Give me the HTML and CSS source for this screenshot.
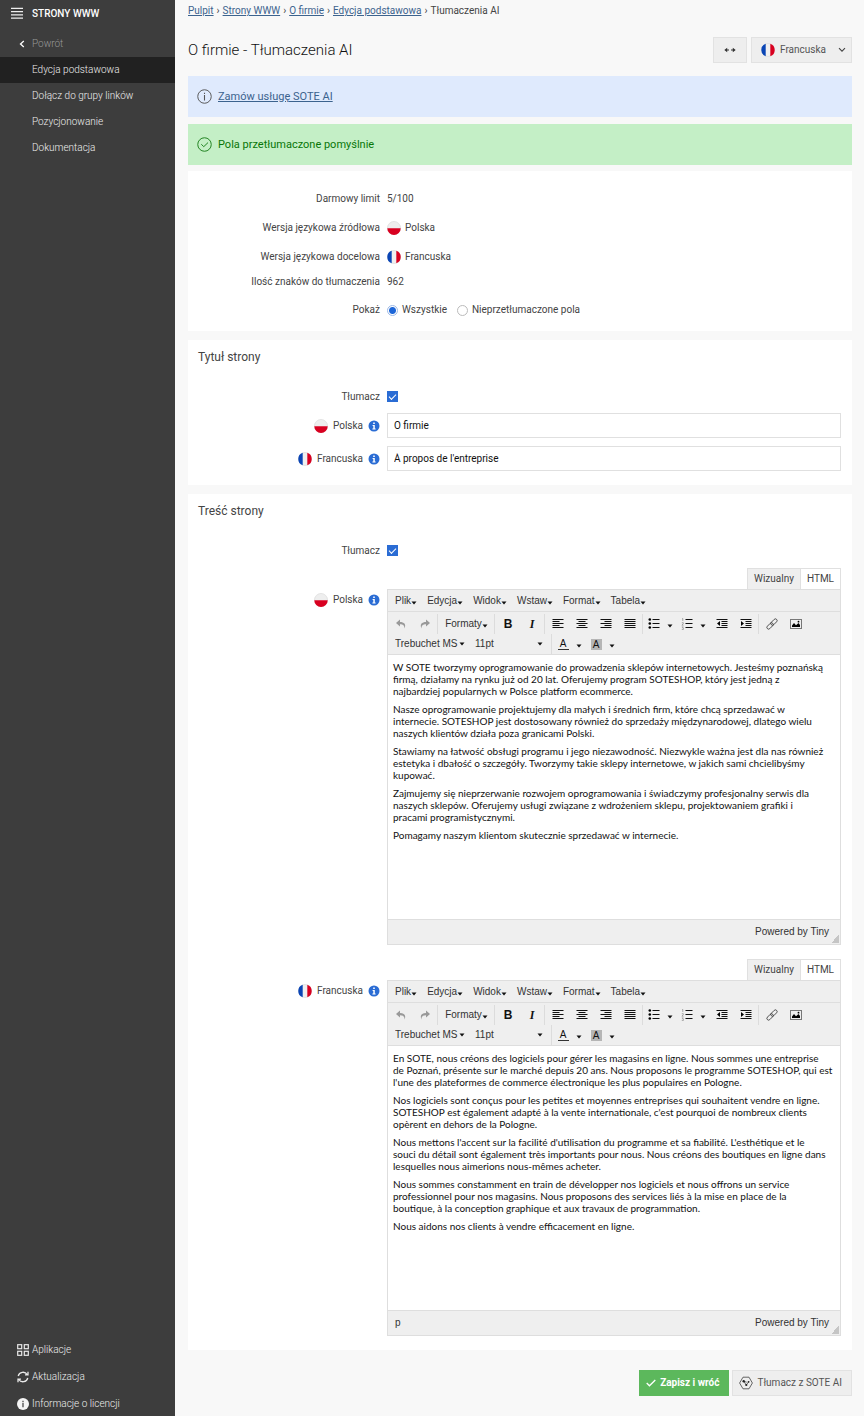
FILE: index.html
```html
<!DOCTYPE html>
<html lang="pl">
<head>
    <meta charset="UTF-8">
    <meta name="viewport" content="width=device-width, initial-scale=1.0">
    <title>O firmie - Tłumaczenia AI</title>
    <link rel="stylesheet" href="styles.css">
</head>
<body>
    <svg class="sprite" aria-hidden="true">
        <symbol id="i-pl" viewBox="0 0 14 14">
            <circle cx="7" cy="7" r="6.500" fill="#eee" stroke="#ddd" stroke-width=".8"/>
            <path d="M.3 7.200a6.700 6.700 0 0 0 13.400 0z" fill="#d80020"/>
        </symbol>
        <symbol id="i-fr" viewBox="0 0 14 14">
            <circle cx="7" cy="7" r="6.500" fill="#f0f0f0" stroke="#ddd" stroke-width=".8"/>
            <path d="M4.700 .7a6.700 6.700 0 0 0 0 12.600z" fill="#0a45b5"/>
            <path d="M9.300 .7a6.700 6.700 0 0 1 0 12.600z" fill="#d80020"/>
        </symbol>
        <symbol id="i-help" viewBox="0 0 12 12">
            <circle cx="6" cy="6" r="5.500" fill="#2a6cd4"/>
            <path d="M5.200 2.500h1.600v1.500H5.200zM4.600 5h2.200v3.500h.8v1H4.400v-1h.9V6h-.7z" fill="#fff"/>
        </symbol>
        <symbol id="i-caret" viewBox="0 0 6 4"><path d="M.5 .5h5L3 3.500z"/></symbol>
        <symbol id="i-undo" viewBox="0 0 12 12"><path d="M5 1.500 1 5l4 3.500V6.200c3 0 4.500 1 4.500 4.300C11.500 6 9 3.900 5 3.900z"/></symbol>
        <symbol id="i-redo" viewBox="0 0 12 12"><path d="M7 1.500 11 5 7 8.500V6.200c-3 0-4.500 1-4.500 4.300C.5 6 3 3.900 7 3.900z"/></symbol>
        <symbol id="i-left" viewBox="0 0 12 12"><path d="M.5 1.500h11M.5 3.500h7M.5 5.500h11M.5 7.500h7M.5 9.500h11" stroke="currentColor"/></symbol>
        <symbol id="i-center" viewBox="0 0 12 12"><path d="M.5 1.500h11M2.500 3.500h7M.5 5.500h11M2.500 7.500h7M.5 9.500h11" stroke="currentColor"/></symbol>
        <symbol id="i-right" viewBox="0 0 12 12"><path d="M.5 1.500h11M4.500 3.500h7M.5 5.500h11M4.500 7.500h7M.5 9.500h11" stroke="currentColor"/></symbol>
        <symbol id="i-justify" viewBox="0 0 12 12"><path d="M.5 1.500h11M.5 3.500h11M.5 5.500h11M.5 7.500h11M.5 9.500h11" stroke="currentColor"/></symbol>
        <symbol id="i-bullets" viewBox="0 0 12 12">
            <path d="M4.500 1.500h7M4.500 5.500h7M4.500 9.500h7" stroke="currentColor"/>
            <circle cx="1.800" cy="1.500" r="1.300"/><circle cx="1.800" cy="5.500" r="1.300"/><circle cx="1.800" cy="9.500" r="1.300"/>
        </symbol>
        <symbol id="i-numbers" viewBox="0 0 12 12">
            <path d="M4.500 1.500h7M4.500 5.500h7M4.500 9.500h7" stroke="currentColor"/>
            <path d="M1 1l.8-.5V3M.8 4.700h1.500v1L.9 7.200h1.600M.8 8.900h1.500l-.7 1 .8.400v1.100H.8" fill="none" stroke="#777" stroke-width=".6"/>
        </symbol>
        <symbol id="i-outdent" viewBox="0 0 12 12"><path d="M.5 1.500h11M5.500 3.500h6M5.500 5.500h6M5.500 7.500h6M.5 9.500h11" stroke="currentColor"/><path d="M4 3v5L1 5.500z"/></symbol>
        <symbol id="i-indent" viewBox="0 0 12 12"><path d="M.5 1.500h11M5.500 3.500h6M5.500 5.500h6M5.500 7.500h6M.5 9.500h11" stroke="currentColor"/><path d="M1 3v5l3-2.500z"/></symbol>
        <symbol id="i-link" viewBox="0 0 12 12">
            <g fill="none" stroke="#333" stroke-width=".8" transform="rotate(-45 6 6)"><rect x="-.5" y="4.300" width="7.500" height="3.400" rx="1.700"/><rect x="5" y="4.300" width="7.500" height="3.400" rx="1.700"/></g>
        </symbol>
        <symbol id="i-image" viewBox="0 0 12 12">
            <rect x=".5" y="1.500" width="11" height="9" fill="none" stroke="#777"/>
            <path d="M2 9V7.500L4 5l2 2.200L8.500 5 10 7v2z"/><circle cx="8.500" cy="3.700" r=".9"/>
        </symbol>
    </svg>

    <div class="layout">
        <aside class="sidebar">
            <div class="sidebar-title">
                <button class="menu-btn" aria-label="Menu">
                    <svg viewBox="0 0 13 13"><path d="M0 1h13M0 4.500h13M0 8h13M0 11.500h13" stroke="#eee" stroke-width="1.500"/></svg>
                </button>
                <span>STRONY WWW</span>
            </div>
            <nav class="side-nav">
                <a href="#" class="back"><svg viewBox="0 0 6 8"><path d="M4.800 1 1.500 4l3.300 3" fill="none" stroke="#fff" stroke-width="1.300"/></svg>Powrót</a>
                <a href="#" class="active">Edycja podstawowa</a>
                <a href="#">Dołącz do grupy linków</a>
                <a href="#">Pozycjonowanie</a>
                <a href="#">Dokumentacja</a>
            </nav>
            <nav class="side-bottom">
                <a href="#">
                    <svg viewBox="0 0 12 12" fill="none" stroke="#e8e8e8" stroke-width="1.200"><rect x=".7" y=".7" width="4" height="4"/><rect x="7.300" y=".7" width="4" height="4"/><rect x=".7" y="7.300" width="4" height="4"/><rect x="7.300" y="7.300" width="4" height="4"/></svg>
                    Aplikacje
                </a>
                <a href="#">
                    <svg viewBox="0 0 12 12" fill="none" stroke="#e8e8e8" stroke-width="1.300"><path d="M1.200 5A5 5 0 0 1 10.200 3.500M10.800 7a5 5 0 0 1-9 1.500M11 .8v3H8M1 11.200v-3h3"/></svg>
                    Aktualizacja
                </a>
                <a href="#">
                    <svg viewBox="0 0 12 12"><circle cx="6" cy="6" r="6" fill="#f4f4f4"/><path d="M5.400 2.700h1.200v1.200H5.400zM5.400 4.800h1.200v4.400H5.400z" fill="#3d3d3d"/></svg>
                    Informacje o licencji
                </a>
            </nav>
        </aside>

        <main class="content">
            <nav class="breadcrumbs">
                <a href="#">Pulpit</a><span>›</span><a href="#">Strony WWW</a><span>›</span><a href="#">O firmie</a><span>›</span><a href="#">Edycja podstawowa</a><span>›</span>Tłumaczenia AI
            </nav>

            <header class="page-head">
                <h1>O firmie - Tłumaczenia AI</h1>
                <button class="btn swap" aria-label="Zamień języki">
                    <svg viewBox="0 0 12 6"><path d="M2 3h3M7 3h3" stroke="#333" stroke-width="1.200"/><path d="M3.200 .8v4.400L.3 3zM8.800 .8v4.400L11.700 3z" fill="#333"/></svg>
                </button>
                <div class="btn lang-select">
                    <svg class="flag"><use href="#i-fr"/></svg>
                    <select aria-label="Język">
                        <option>Francuska</option>
                        <option>Polska</option>
                    </select>
                    <svg class="chevron" viewBox="0 0 8 6"><path d="M1 1.200 4 4.200l3-3" fill="none" stroke="#444" stroke-width="1.100"/></svg>
                </div>
            </header>

            <div class="alert info">
                <svg viewBox="0 0 14 14"><circle cx="7" cy="7" r="6.300" fill="none" stroke="#555" stroke-width=".9"/><path d="M6.500 3.500h1v1.100h-1zM6.500 5.700h1v5h-1z" fill="#555"/></svg>
                <a href="#">Zamów usługę SOTE AI</a>
            </div>
            <div class="alert success">
                <svg viewBox="0 0 14 14" fill="none" stroke="#1c7f1c" stroke-width=".9"><circle cx="7" cy="7" r="6.300"/><path d="M4 6.800 6.300 9l4-3.800"/></svg>
                <span>Pola przetłumaczone pomyślnie</span>
            </div>

            <section class="panel summary">
                <div class="row"><span class="label">Darmowy limit</span><span>5/100</span></div>
                <div class="row"><span class="label">Wersja językowa źródłowa</span><span class="lang"><svg class="flag"><use href="#i-pl"/></svg>Polska</span></div>
                <div class="row"><span class="label">Wersja językowa docelowa</span><span class="lang"><svg class="flag"><use href="#i-fr"/></svg>Francuska</span></div>
                <div class="row short"><span class="label">Ilość znaków do tłumaczenia</span><span>962</span></div>
                <div class="row tall">
                    <span class="label">Pokaż</span>
                    <div class="radios">
                        <label><input type="radio" name="show" checked>Wszystkie</label>
                        <label><input type="radio" name="show">Nieprzetłumaczone pola</label>
                    </div>
                </div>
            </section>

            <section class="panel">
                <h2>Tytuł strony</h2>
                <div class="row check-row"><label class="label" for="translateTitle">Tłumacz</label><input type="checkbox" id="translateTitle" checked></div>
                <div class="row field-row">
                    <label class="label" for="titlePl"><svg class="flag"><use href="#i-pl"/></svg>Polska<svg class="help"><use href="#i-help"/></svg></label>
                    <input type="text" id="titlePl" value="O firmie">
                </div>
                <div class="row field-row">
                    <label class="label" for="titleFr"><svg class="flag"><use href="#i-fr"/></svg>Francuska<svg class="help"><use href="#i-help"/></svg></label>
                    <input type="text" id="titleFr" value="À propos de l'entreprise">
                </div>
            </section>

            <section class="panel">
                <h2>Treść strony</h2>
                <div class="row check-row"><label class="label" for="translateBody">Tłumacz</label><input type="checkbox" id="translateBody" checked></div>

                <div class="row editor-row">
                    <span class="label" id="bodyPl"><svg class="flag"><use href="#i-pl"/></svg>Polska<svg class="help"><use href="#i-help"/></svg></span>
                    <div class="editor-wrap">
                        <div class="tabs"><button class="active">Wizualny</button><button>HTML</button></div>
                        <div class="editor">
                            <div class="menubar">
                                <button>Plik<svg class="caret"><use href="#i-caret"/></svg></button>
                                <button>Edycja<svg class="caret"><use href="#i-caret"/></svg></button>
                                <button>Widok<svg class="caret"><use href="#i-caret"/></svg></button>
                                <button>Wstaw<svg class="caret"><use href="#i-caret"/></svg></button>
                                <button>Format<svg class="caret"><use href="#i-caret"/></svg></button>
                                <button>Tabela<svg class="caret"><use href="#i-caret"/></svg></button>
                            </div>
                            <div class="toolbar">
                                <div class="tools">
                                    <div class="group">
                                        <button class="off" aria-label="Cofnij"><svg><use href="#i-undo"/></svg></button>
                                        <button class="off" aria-label="Ponów"><svg><use href="#i-redo"/></svg></button>
                                    </div>
                                    <div class="group"><button class="formats">Formaty<svg class="caret"><use href="#i-caret"/></svg></button></div>
                                    <div class="group">
                                        <button class="bold">B</button>
                                        <button class="italic">I</button>
                                    </div>
                                    <div class="group">
                                        <button aria-label="Do lewej"><svg><use href="#i-left"/></svg></button>
                                        <button aria-label="Do środka"><svg><use href="#i-center"/></svg></button>
                                        <button aria-label="Do prawej"><svg><use href="#i-right"/></svg></button>
                                        <button aria-label="Wyjustuj"><svg><use href="#i-justify"/></svg></button>
                                    </div>
                                    <div class="group">
                                        <button class="split" aria-label="Lista"><svg><use href="#i-bullets"/></svg><svg class="caret"><use href="#i-caret"/></svg></button>
                                        <button class="split" aria-label="Lista numerowana"><svg><use href="#i-numbers"/></svg><svg class="caret"><use href="#i-caret"/></svg></button>
                                        <button aria-label="Zmniejsz wcięcie"><svg><use href="#i-outdent"/></svg></button>
                                        <button aria-label="Zwiększ wcięcie"><svg><use href="#i-indent"/></svg></button>
                                    </div>
                                    <div class="group">
                                        <button aria-label="Odnośnik"><svg><use href="#i-link"/></svg></button>
                                        <button aria-label="Obraz"><svg><use href="#i-image"/></svg></button>
                                    </div>
                                </div>
                                <div class="tools">
                                    <div class="group fonts">
                                        <div class="pick font"><select aria-label="Czcionka"><option>Trebuchet MS</option></select><svg class="caret"><use href="#i-caret"/></svg></div>
                                        <div class="pick size"><select aria-label="Rozmiar"><option>11pt</option></select><svg class="caret"><use href="#i-caret"/></svg></div>
                                    </div>
                                    <div class="group">
                                        <button class="split" aria-label="Kolor tekstu"><span class="fore">A</span><svg class="caret"><use href="#i-caret"/></svg></button>
                                        <button class="split" aria-label="Kolor tła"><span class="back-color">A</span><svg class="caret"><use href="#i-caret"/></svg></button>
                                    </div>
                                </div>
                            </div>
                            <div class="text" contenteditable="true" spellcheck="false" role="textbox" aria-labelledby="bodyPl">
                                <p>W SOTE tworzymy oprogramowanie do prowadzenia sklepów internetowych. Jesteśmy poznańską<br>firmą, działamy na rynku już od 20 lat. Oferujemy program SOTESHOP, który jest jedną z<br>najbardziej popularnych w Polsce platform ecommerce.</p>
                                <p>Nasze oprogramowanie projektujemy dla małych i średnich firm, które chcą sprzedawać w<br>internecie. SOTESHOP jest dostosowany również do sprzedaży międzynarodowej, dlatego wielu<br>naszych klientów działa poza granicami Polski.</p>
                                <p>Stawiamy na łatwość obsługi programu i jego niezawodność. Niezwykle ważna jest dla nas również<br>estetyka i dbałość o szczegóły. Tworzymy takie sklepy internetowe, w jakich sami chcielibyśmy<br>kupować.</p>
                                <p>Zajmujemy się nieprzerwanie rozwojem oprogramowania i świadczymy profesjonalny serwis dla<br>naszych sklepów. Oferujemy usługi związane z wdrożeniem sklepu, projektowaniem grafiki i<br>pracami programistycznymi.</p>
                                <p>Pomagamy naszym klientom skutecznie sprzedawać w internecie.</p>
                            </div>
                            <div class="statusbar"><span></span><span>Powered by Tiny</span></div>
                        </div>
                    </div>
                </div>

                <div class="row editor-row">
                    <span class="label" id="bodyFr"><svg class="flag"><use href="#i-fr"/></svg>Francuska<svg class="help"><use href="#i-help"/></svg></span>
                    <div class="editor-wrap">
                        <div class="tabs"><button class="active">Wizualny</button><button>HTML</button></div>
                        <div class="editor">
                            <div class="menubar">
                                <button>Plik<svg class="caret"><use href="#i-caret"/></svg></button>
                                <button>Edycja<svg class="caret"><use href="#i-caret"/></svg></button>
                                <button>Widok<svg class="caret"><use href="#i-caret"/></svg></button>
                                <button>Wstaw<svg class="caret"><use href="#i-caret"/></svg></button>
                                <button>Format<svg class="caret"><use href="#i-caret"/></svg></button>
                                <button>Tabela<svg class="caret"><use href="#i-caret"/></svg></button>
                            </div>
                            <div class="toolbar">
                                <div class="tools">
                                    <div class="group">
                                        <button class="off" aria-label="Cofnij"><svg><use href="#i-undo"/></svg></button>
                                        <button class="off" aria-label="Ponów"><svg><use href="#i-redo"/></svg></button>
                                    </div>
                                    <div class="group"><button class="formats">Formaty<svg class="caret"><use href="#i-caret"/></svg></button></div>
                                    <div class="group">
                                        <button class="bold">B</button>
                                        <button class="italic">I</button>
                                    </div>
                                    <div class="group">
                                        <button aria-label="Do lewej"><svg><use href="#i-left"/></svg></button>
                                        <button aria-label="Do środka"><svg><use href="#i-center"/></svg></button>
                                        <button aria-label="Do prawej"><svg><use href="#i-right"/></svg></button>
                                        <button aria-label="Wyjustuj"><svg><use href="#i-justify"/></svg></button>
                                    </div>
                                    <div class="group">
                                        <button class="split" aria-label="Lista"><svg><use href="#i-bullets"/></svg><svg class="caret"><use href="#i-caret"/></svg></button>
                                        <button class="split" aria-label="Lista numerowana"><svg><use href="#i-numbers"/></svg><svg class="caret"><use href="#i-caret"/></svg></button>
                                        <button aria-label="Zmniejsz wcięcie"><svg><use href="#i-outdent"/></svg></button>
                                        <button aria-label="Zwiększ wcięcie"><svg><use href="#i-indent"/></svg></button>
                                    </div>
                                    <div class="group">
                                        <button aria-label="Odnośnik"><svg><use href="#i-link"/></svg></button>
                                        <button aria-label="Obraz"><svg><use href="#i-image"/></svg></button>
                                    </div>
                                </div>
                                <div class="tools">
                                    <div class="group fonts">
                                        <div class="pick font"><select aria-label="Czcionka"><option>Trebuchet MS</option></select><svg class="caret"><use href="#i-caret"/></svg></div>
                                        <div class="pick size"><select aria-label="Rozmiar"><option>11pt</option></select><svg class="caret"><use href="#i-caret"/></svg></div>
                                    </div>
                                    <div class="group">
                                        <button class="split" aria-label="Kolor tekstu"><span class="fore">A</span><svg class="caret"><use href="#i-caret"/></svg></button>
                                        <button class="split" aria-label="Kolor tła"><span class="back-color">A</span><svg class="caret"><use href="#i-caret"/></svg></button>
                                    </div>
                                </div>
                            </div>
                            <div class="text" contenteditable="true" spellcheck="false" role="textbox" aria-labelledby="bodyFr">
                                <p>En SOTE, nous créons des logiciels pour gérer les magasins en ligne. Nous sommes une entreprise<br>de Poznań, présente sur le marché depuis 20 ans. Nous proposons le programme SOTESHOP, qui est<br>l'une des plateformes de commerce électronique les plus populaires en Pologne.</p>
                                <p>Nos logiciels sont conçus pour les petites et moyennes entreprises qui souhaitent vendre en ligne.<br>SOTESHOP est également adapté à la vente internationale, c'est pourquoi de nombreux clients<br>opèrent en dehors de la Pologne.</p>
                                <p>Nous mettons l'accent sur la facilité d'utilisation du programme et sa fiabilité. L'esthétique et le<br>souci du détail sont également très importants pour nous. Nous créons des boutiques en ligne dans<br>lesquelles nous aimerions nous-mêmes acheter.</p>
                                <p>Nous sommes constamment en train de développer nos logiciels et nous offrons un service<br>professionnel pour nos magasins. Nous proposons des services liés à la mise en place de la<br>boutique, à la conception graphique et aux travaux de programmation.</p>
                                <p>Nous aidons nos clients à vendre efficacement en ligne.</p>
                            </div>
                            <div class="statusbar"><span>p</span><span>Powered by Tiny</span></div>
                        </div>
                    </div>
                </div>
            </section>

            <footer class="actions">
                <button class="btn save"><svg viewBox="0 0 10 8"><path d="M.7 4 3.500 6.800 9.300 1" fill="none" stroke="#fff" stroke-width="1.300"/></svg>Zapisz i wróć</button>
                <button class="btn translate">
                    <svg viewBox="0 0 14 14"><path d="M4 1.200h6L13.400 7 10 12.800H4L.6 7z" fill="none" stroke="#555" stroke-width=".9"/><path d="M4.700 5.300 7.300 9l2.200-3M4.700 5.300l3 .9" fill="none" stroke="#333" stroke-width=".7"/><circle cx="4.700" cy="5.300" r="1.200" fill="#222"/><circle cx="7.300" cy="9" r="1.100" fill="#222"/><circle cx="9.600" cy="5.800" r=".9" fill="#222"/></svg>
                    Tłumacz z SOTE AI
                </button>
            </footer>
        </main>
    </div>
</body>
</html>
```
FILE: styles.css
```css
* {
    box-sizing: border-box;
}
body {
    margin: 0;
    background-color: #f8f8f8;
    color: #444;
    font-family: Roboto, sans-serif;
    font-size: 10px;
    line-height: 14px;
}
button, input, select {
    font: inherit;
    color: inherit;
    margin: 0;
}
button {
    padding: 0;
    border: none;
    background: none;
    cursor: pointer;
}
svg {
    flex: none;
}
.sprite {
    display: none;
}
.layout {
    display: flex;
    min-height: 100vh;
}

/* Sidebar */
.sidebar {
    display: flex;
    flex-direction: column;
    flex: none;
    width: 175px;
    background-color: #3d3d3d;
    color: #eee;
    font-weight: 300;
}
.sidebar a {
    color: inherit;
    text-decoration: none;
}
.sidebar-title {
    display: flex;
    align-items: center;
    gap: 9px;
    height: 27px;
    padding-left: 11px;
    color: #fff;
    font-weight: 500;
}
.menu-btn, .menu-btn svg {
    display: block;
    width: 12px;
    height: 13px;
}
.side-nav {
    padding-top: 4px;
}
.side-nav a {
    display: flex;
    align-items: center;
    height: 26px;
    padding-left: 32px;
}
.side-nav .back {
    gap: 7px;
    padding-left: 19px;
    color: #999;
}
.back svg {
    width: 6px;
    height: 8px;
}
.side-nav .active {
    background-color: #212121;
}
.side-bottom {
    margin-top: auto;
}
.side-bottom a {
    display: flex;
    align-items: center;
    gap: 3px;
    height: 27px;
    padding-left: 17px;
}
.side-bottom svg {
    width: 12px;
    height: 12px;
}

/* Content */
.content {
    flex: 1;
    min-width: 0;
    padding: 4px 12px 21px 13px;
}
.content a {
    color: #3c638e;
}
.breadcrumbs span {
    margin: 0 3px;
}
.page-head {
    display: flex;
    gap: 4px;
    align-items: center;
    margin: 19px 0 13px;
}
.page-head h1 {
    flex: 1;
    margin: 0;
    font-size: 15px;
    line-height: 20px;
    font-weight: 300;
    color: #111;
}
.btn {
    display: flex;
    align-items: center;
    height: 26px;
    border: 1px solid #e2e2e2;
    background-color: #eee;
    color: #555;
}
.swap {
    justify-content: center;
    width: 34px;
}
.swap svg {
    width: 12px;
    height: 6px;
}
.flag {
    width: 14px;
    height: 14px;
}
.lang-select {
    position: relative;
    width: 101px;
    padding-left: 9px;
}
.lang-select select {
    flex: 1;
    height: 24px;
    padding: 0 16px 0 5px;
    border: none;
    background: none;
    appearance: none;
}
.chevron {
    position: absolute;
    right: 5px;
    width: 8px;
    height: 6px;
    pointer-events: none;
}
.alert {
    display: flex;
    gap: 6px;
    align-items: center;
    height: 41px;
    margin-bottom: 7px;
    padding: 0 9px;
    font-size: 11px;
}
.alert svg {
    width: 15px;
    height: 15px;
}
.alert.info {
    background-color: #dfeafd;
}
.alert.success {
    margin-bottom: 6px;
    background-color: #c4efc6;
    color: #087608;
}
.panel {
    margin-bottom: 9px;
    padding: 10px 11px 14px 10px;
    background-color: #fff;
}
.panel.summary {
    padding-top: 13px;
    padding-bottom: 3px;
}
.panel h2 {
    margin: 0 0 24px;
    font-size: 12px;
    line-height: 14px;
    font-weight: 400;
}
.row {
    display: grid;
    grid-template-columns: 182px 1fr;
    column-gap: 7px;
    align-items: center;
    min-height: 29px;
}
.row.short {
    min-height: 21px;
}
.row.tall {
    min-height: 36px;
}
.label {
    display: flex;
    align-items: center;
    justify-content: flex-end;
    gap: 5px;
}
.lang {
    display: flex;
    align-items: center;
    gap: 4px;
}
.help {
    width: 12px;
    height: 12px;
}
.radios {
    display: flex;
    gap: 10px;
}
.radios label {
    display: flex;
    align-items: center;
    gap: 4px;
}
input[type="radio"] {
    appearance: none;
    width: 11px;
    height: 11px;
    border: 1px solid #bbb;
    border-radius: 50%;
    background-color: #fff;
}
input[type="radio"]:checked {
    border-color: #9db9e6;
    background: radial-gradient(circle, #1d66d8 3px, #fff 4px);
}
.row.check-row {
    min-height: 17px;
}
input[type="checkbox"] {
    appearance: none;
    width: 11px;
    height: 11px;
    background: #2a6cd4;
    display: grid;
    place-items: center;
}
input[type="checkbox"]:checked::before {
    content: "";
    width: 6px;
    height: 3px;
    margin-bottom: 2px;
    border-left: 1px solid #fff;
    border-bottom: 1px solid #fff;
    transform: rotate(-45deg);
}
.row.field-row {
    min-height: 25px;
    margin-top: 8px;
}
input[type="text"] {
    width: 100%;
    height: 25px;
    padding: 0 6px;
    border: 1px solid #e0e0e0;
    background-color: #fff;
    color: #111;
}

/* Editor */
.editor-row {
    align-items: start;
    margin-top: 9px;
}
.editor-row + .editor-row {
    margin-top: 14px;
}
.editor-row .label {
    padding-top: 25px;
}
.tabs {
    display: flex;
    justify-content: flex-end;
}
.tabs button {
    height: 21px;
    padding: 0 6px;
    border: 1px solid #e0e0e0;
    border-bottom: none;
}
.tabs .active {
    border-right: none;
    background-color: #efefef;
}
.editor {
    border: 1px solid #dedede;
    background-color: #efefef;
    color: #333;
    font-family: "Liberation Sans", Arial, sans-serif;
}
.menubar {
    display: flex;
    gap: 10px;
    height: 22px;
    padding-left: 7px;
    border-bottom: 1px solid #dedede;
}
.menubar button, .formats {
    display: flex;
    align-items: center;
}
.caret {
    width: 6px;
    height: 4px;
    fill: #111;
}
.menubar .caret, .formats .caret, .split .caret {
    margin-top: 4px;
}
.toolbar {
    height: 43px;
    padding-top: 2px;
    border-bottom: 1px solid #dedede;
}
.tools {
    display: flex;
    height: 20px;
    padding-left: 1px;
}
.group {
    display: flex;
    align-items: center;
}
.group + .group {
    border-left: 1px solid #dcdcdc;
    padding-left: 1px;
}
.group button {
    display: flex;
    align-items: center;
    justify-content: center;
    width: 24px;
    height: 20px;
    color: #111;
}
.group svg:not(.caret) {
    width: 12px;
    height: 12px;
}
.group .off {
    fill: #999;
}
.group .formats {
    width: 55px;
    color: #333;
}
.group .bold, .group .italic {
    font-size: 12px;
    font-weight: 700;
}
.group .italic {
    font-family: "Liberation Serif", serif;
    font-style: italic;
}
.group .split {
    width: 33px;
    gap: 7px;
}
.fonts {
    width: 162px;
    padding-left: 6px;
}
.pick {
    display: flex;
    align-items: center;
}
.pick select {
    flex: 1;
    width: 100%;
    padding: 0;
    border: none;
    background: none;
    appearance: none;
}
.font {
    width: 70px;
}
.size {
    width: 68px;
    margin-left: 10px;
}
.fore {
    width: 11px;
    line-height: 11px;
    border-bottom: 1px solid #333;
}
.back-color {
    width: 11px;
    line-height: 11px;
    background-color: #b5b5b5;
}
.text {
    min-height: 264px;
    padding: 6px 5px;
    background-color: #fff;
    color: #111;
    font-family: "Trebuchet MS", Lato, sans-serif;
    font-size: 10px;
    line-height: 12px;
}
.text p {
    margin: 0 0 6px;
}
.statusbar {
    display: flex;
    justify-content: space-between;
    align-items: center;
    height: 25px;
    padding: 0 11px 0 7px;
    border-top: 1px solid #dedede;
    background: linear-gradient(135deg, transparent 50%, #c5c5c5 50%) right 1px bottom 1px / 8px 8px no-repeat;
}

.actions {
    display: flex;
    justify-content: flex-end;
    gap: 3px;
    padding-top: 11px;
}
.actions .btn {
    gap: 4px;
    padding: 0 9px 0 6px;
}
.actions .save {
    border-color: #5cb85c;
    background-color: #5cb85c;
    color: #fff;
    font-weight: 700;
}
.save svg {
    width: 10px;
    height: 8px;
}
.translate svg {
    width: 14px;
    height: 14px;
}
```
